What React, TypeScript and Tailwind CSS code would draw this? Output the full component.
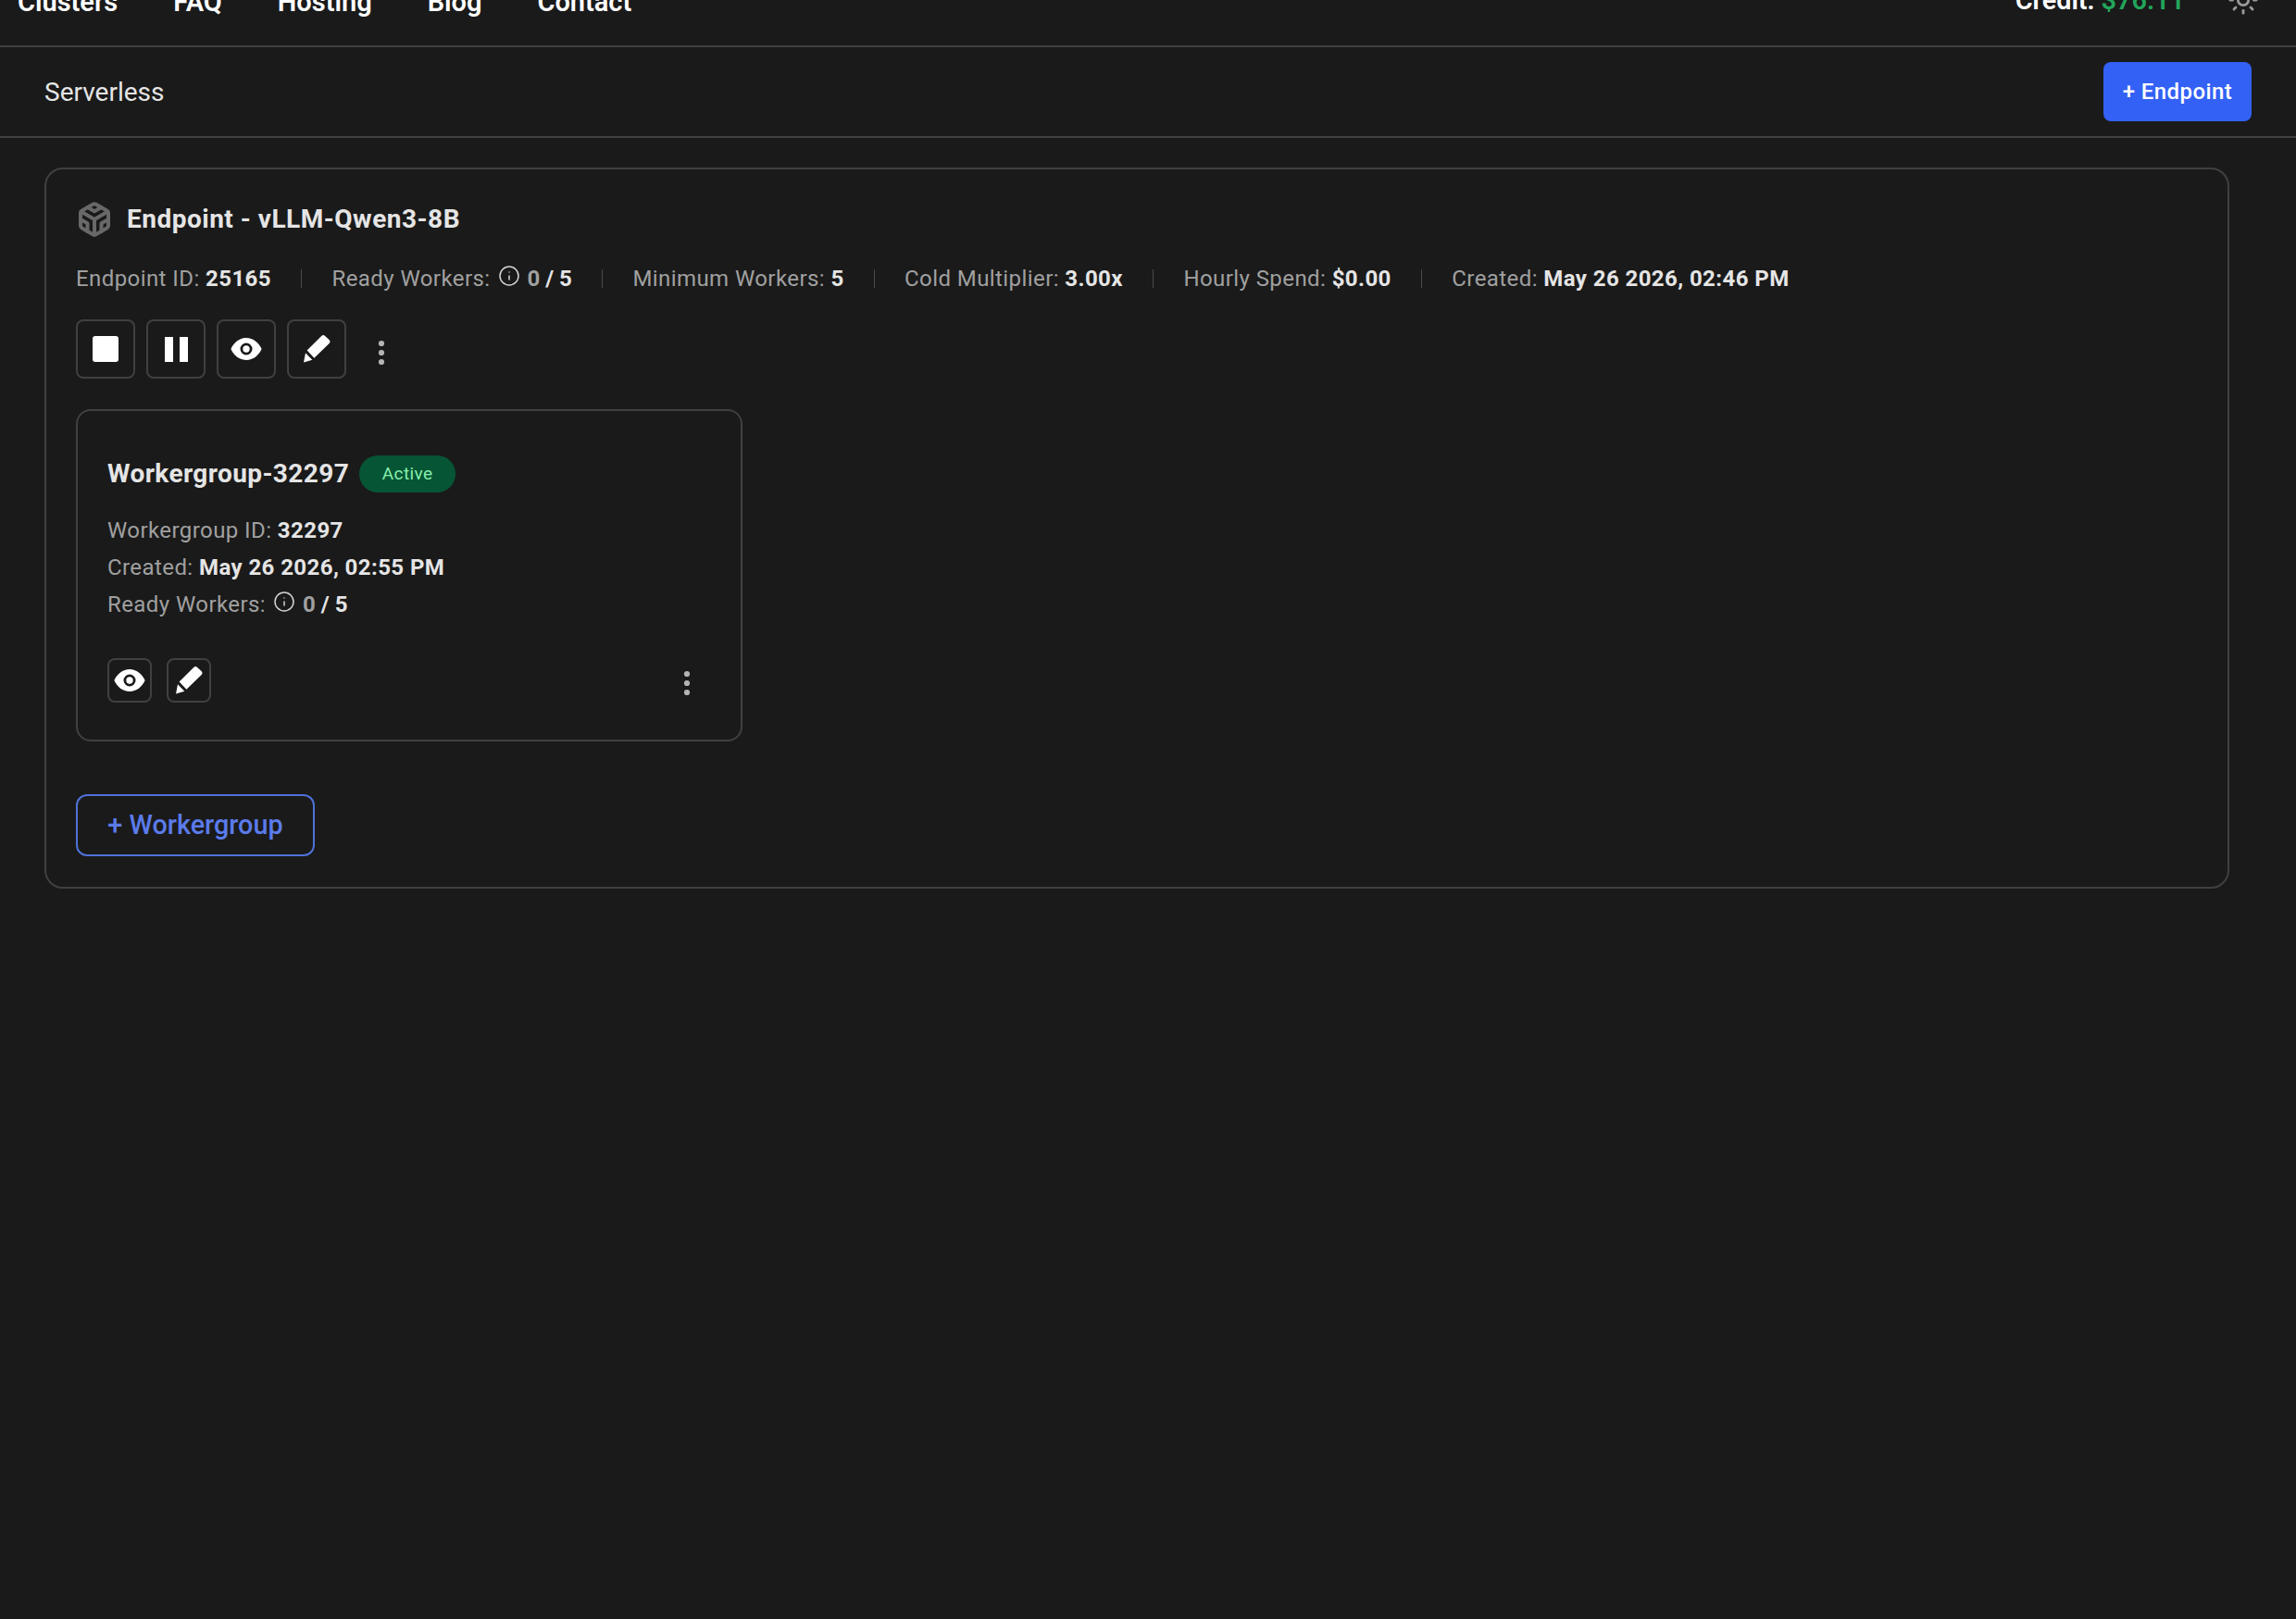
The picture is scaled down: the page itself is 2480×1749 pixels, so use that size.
import React from 'react';
import { Info, Sun } from 'lucide-react';
import { FiCodesandbox } from 'react-icons/fi';

const navItems = ['Clusters', 'FAQ', 'Hosting', 'Blog', 'Contact'];

function EyeIcon({ className }: { className?: string }) {
  return (
    <svg viewBox="0 0 34 26" className={className} fill="currentColor">
      <path fillRule="evenodd" d="M17 1C9.6 1 3.4 6 .4 13 3.4 20 9.6 25 17 25s13.600-5 16.600-12C30.600 6 24.400 1 17 1zm0 18.500a6.500 6.500 0 1 1 0-13 6.500 6.500 0 0 1 0 13z" />
      <circle cx="17" cy="13" r="3.700" />
    </svg>
  );
}

function PencilIcon({ className }: { className?: string }) {
  return (
    <svg viewBox="0 0 29 30" className={className} fill="currentColor">
      <path d="M3.600 16.600L19.200 1a2.800 2.800 0 0 1 3.900 0l4.400 4a2.800 2.800 0 0 1 .1 3.900L11.400 24.700z" />
      <path d="M2 19.200l7.300 7.600L0 29.500z" />
    </svg>
  );
}

function Kebab({ className }: { className?: string }) {
  return (
    <svg viewBox="0 0 8 28" className={className} fill="#b4b4b4">
      <circle cx="4" cy="4" r="3.100" />
      <circle cx="4" cy="14" r="3.100" />
      <circle cx="4" cy="24" r="3.100" />
    </svg>
  );
}

function Sep() {
  return <span className="mx-[32px] h-[20px] w-[1.500px] bg-[#4a4a4a]" />;
}

function Meta({ label, value }: { label: string; value: string }) {
  return (
    <span className="text-[#a0a0a0]">
      {label} <span className="font-bold text-[#e5e5e5]">{value}</span>
    </span>
  );
}

function ReadyWorkers({ gap }: { gap: string }) {
  return (
    <span className="flex items-center text-[#a0a0a0]">
      Ready Workers:
      <Info className={`${gap} mb-[6px] h-[24px] w-[24px] text-[#d4d4d4]`} strokeWidth={1.500} />
      <span className="ml-[8px] font-bold tracking-[0px]">
        0 <span className="text-[#e5e5e5]">/ 5</span>
      </span>
    </span>
  );
}

function IconButton({ size, children }: { size: 'lg' | 'sm'; children: React.ReactNode }) {
  return (
    <button
      className={
        size === 'lg'
          ? 'flex h-[64px] w-[64px] items-center justify-center rounded-[8px] border-2 border-[#404040] text-white'
          : 'flex h-[48px] w-[48px] items-center justify-center rounded-[8px] border-2 border-[#404040] text-white'
      }
    >
      {children}
    </button>
  );
}

export default function App() {
  return (
    <div className="h-[1749px] overflow-hidden bg-[#1a1a1a] font-['Roboto',sans-serif] text-[24px] tracking-[0.42px]">
      <header className="flex h-[51px] items-end justify-between border-b-2 border-[#404040] pb-[32px] pl-[19px] pr-[40px] leading-[30px]">
        <nav className="flex gap-[60px] text-[29px] font-semibold tracking-normal text-white">
          {navItems.map((item) => (
            <span key={item}>{item}</span>
          ))}
        </nav>
        <div className="flex items-center gap-[46px]">
          <span className="text-[28.800px] font-semibold tracking-normal text-white">
            Credit: <span className="text-[#22a55a]">$76.11</span>
          </span>
          <Sun className="h-[34px] w-[34px] text-[#9a9a9a]" strokeWidth={2} />
        </div>
      </header>

      <div className="flex h-[98px] items-center justify-between border-b-2 border-[#404040] pl-[48px] pr-[48px]">
        <h2 className="mt-px text-[28px] font-normal tracking-normal text-[#e5e5e5]">Serverless</h2>
        <button className="flex h-[64px] w-[160px] items-center justify-center rounded-[8px] bg-[#3361f5] text-[24px] font-medium text-white">
          + Endpoint
        </button>
      </div>

      <main className="pl-[48px] pr-[72px] pt-[32px]">
        <section className="rounded-[20px] border-2 border-[#404040] pb-[33px] pl-[32px] pt-[35px]">
          <div className="flex h-[38px] items-center">
            <FiCodesandbox className="h-[40px] w-[40px] text-[#686868]" strokeWidth={2.400} />
            <h3 className="ml-[15px] text-[28px] font-bold tracking-[0.5px] text-[#e5e5e5]">Endpoint - vLLM-Qwen3-8B</h3>
          </div>

          <div className="mt-[25px] flex h-[40px] items-center">
            <Meta label="Endpoint ID:" value="25165" />
            <Sep />
            <ReadyWorkers gap="ml-[8px]" />
            <Sep />
            <Meta label="Minimum Workers:" value="5" />
            <Sep />
            <Meta label="Cold Multiplier:" value="3.00x" />
            <Sep />
            <Meta label="Hourly Spend:" value="$0.00" />
            <Sep />
            <Meta label="Created:" value="May 26 2026, 02:46 PM" />
          </div>

          <div className="mt-[24px] flex items-center gap-[12px]">
            <IconButton size="lg">
              <span className="h-[28px] w-[28px] rounded-[3px] bg-white" />
            </IconButton>
            <IconButton size="lg">
              <span className="flex gap-[7px]">
                <span className="h-[27px] w-[9px] bg-white" />
                <span className="h-[27px] w-[9px] bg-white" />
              </span>
            </IconButton>
            <IconButton size="lg">
              <EyeIcon className="h-[26px] w-[34px]" />
            </IconButton>
            <IconButton size="lg">
              <PencilIcon className="h-[30px] w-[29px]" />
            </IconButton>
            <Kebab className="ml-[22px] mt-[7px] h-[28px] w-[8px]" />
          </div>

          <div className="mt-[33px] flex h-[359px] w-[720px] flex-col rounded-[16px] border-2 border-[#404040] pl-[32px] pr-[54px] pt-[47px]">
            <div className="flex items-center">
              <h4 className="text-[28px] font-bold tracking-[0.4px] text-[#e5e5e5]">Workergroup-32297</h4>
              <span className="ml-[11px] flex h-[40px] w-[104px] items-center justify-center rounded-full bg-[#065535] text-[19px] text-[#86efac]">
                Active
              </span>
            </div>

            <div className="mt-[20px] flex flex-col leading-[40px]">
              <Meta label="Workergroup ID:" value="32297" />
              <Meta label="Created:" value="May 26 2026, 02:55 PM" />
              <ReadyWorkers gap="ml-[8px]" />
            </div>

            <div className="mt-[38px] flex items-center justify-between">
              <div className="flex gap-[16px]">
                <IconButton size="sm">
                  <EyeIcon className="h-[26px] w-[34px]" />
                </IconButton>
                <IconButton size="sm">
                  <PencilIcon className="h-[30px] w-[29px]" />
                </IconButton>
              </div>
              <Kebab className="mt-[5px] h-[28px] w-[8px]" />
            </div>
          </div>

          <button className="mt-[57px] flex h-[67px] w-[258px] items-center justify-center rounded-[12px] border-2 border-[#4f72d9] text-[28.800px] font-medium tracking-normal text-[#5b7bea]">
            + Workergroup
          </button>
        </section>
      </main>
    </div>
  );
}
